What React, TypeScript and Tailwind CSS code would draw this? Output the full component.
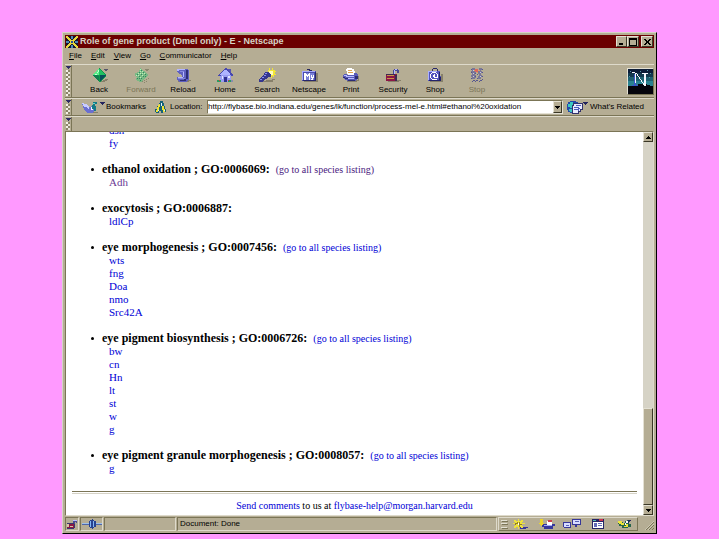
import type { ReactNode } from "react";

const menus = ["File", "Edit", "View", "Go", "Communicator", "Help"];

function Svg({ w = 20, h = 15, children }: { w?: number; h?: number; children: ReactNode }) {
  return (
    <svg width={w} height={h} viewBox={`0 0 ${w} ${h}`} shapeRendering="crispEdges" aria-hidden="true" className="block shrink-0">
      {children}
    </svg>
  );
}

const BackIcon = () => (
  <Svg>
    <path d="M9 13h5v-1h2v-1h3v1h-1v1h-2v1h-6z" fill="#87806a" />
    <path d="M10 0L17 6L17 8L11 14L10 14L4 8L4 6z" fill="#0f9a4c" />
    <path d="M10 0L10 7L4 7L4 6z" fill="#5af08a" />
    <path d="M10 1L16 6L16 7L10 7z" fill="#1fbf62" />
    <path d="M11 7L17 7L11 14z" fill="#06505a" />
    <path d="M4 7h5v1h1v5h-1l-5-5z" fill="#0f8050" />
    <path d="M8 4h1v1h-1zM6 6h2v1h-2zM9 2h1v2h-1z" fill="#c4ffd2" />
    <path d="M15 1h4v1h-1v1h-2v-1h-1z" fill="#55556b" />
  </Svg>
);

const ForwardIcon = () => (
  <Svg>
    <path d="M9 0L17 6L17 8L10 14L9 14L4 11L6 9L4 8L4 5L8 4z" fill="#7ab884" />
    <path d="M9 1h1v1h-1zM11 3h1v1h-1zM7 5h1v1h-1zM9 5h1v1h-1zM11 5h1v1h-1zM13 5h1v1h-1zM5 7h1v1h-1zM7 7h1v1h-1zM9 9h1v1h-1zM11 7h1v1h-1zM9 3h1v1h-1z" fill="#b8f0b8" />
    <path d="M10 2h1v1h-1zM8 4h1v1h-1zM12 4h1v1h-1zM6 6h1v1h-1zM10 6h1v1h-1zM14 6h1v1h-1zM8 8h1v1h-1zM12 8h1v1h-1zM10 10h1v1h-1zM8 10h1v1h-1zM6 10h1v1h-1zM9 12h1v1h-1zM14 8h1v1h-1z" fill="#2c8a60" />
    <path d="M11 13h1v1h-1zM13 12h1v1h-1zM15 11h1v1h-1zM17 10h1v1h-1zM13 14h1v1h-1zM15 13h1v1h-1zM14 1h4v1h-1v1h-2v-1h-1z" fill="#8a856c" />
  </Svg>
);

const ReloadIcon = () => (
  <Svg>
    <path d="M13 12h5v1h-2v1h-11v-1h8z" fill="#87806a" />
    <path d="M4 1h9l3 1v9l-3 3h-6l-3-2v-3h5v-2l-5-3z" fill="#5f60c0" />
    <path d="M4 1h8v1h-6v1h-2zM5 9h5v1h-5zM10 4h1v5h-1z" fill="#b4b7ff" />
    <path d="M13 2h2v9h-2v2h-2v-2h2zM7 12h5v1h-5z" fill="#2d2d75" />
    <path d="M7 3h4v1h-4zM5 10h7v1h-7z" fill="#8588dd" />
  </Svg>
);

const HomeIcon = () => (
  <Svg>
    <path d="M3 12h15v2h-15z" fill="#878cb0" />
    <path d="M13 1h3v6h-3z" fill="#5656b2" />
    <path d="M5 7h11v7h-11z" fill="#989cf0" />
    <path d="M10 0h1l7 7v1h-2l-5-5-6 5h-2v-1z" fill="#4848b0" />
    <path d="M10 2h1l4 4v1h-10v-1z" fill="#aeb4ff" />
    <path d="M9 9h3v5h-3z" fill="#303090" />
    <path d="M7 8h1v3h-1zM13 8h2v2h-2z" fill="#e3e7ff" />
    <path d="M2 12h4v2h-4zM13 12h3v2h-3z" fill="#2a9b60" />
    <path d="M4 12h1v1h-1zM13 12h1v1h-1z" fill="#e03535" />
  </Svg>
);

const SearchIcon = () => (
  <Svg>
    <path d="M5 13h4v-1h6v-1h3v1h-2v2h-11z" fill="#87806a" />
    <path d="M12 0h1v2h2v-2h1v2h2v1h1v1h-1v2h1v1h-2v2h-1v-1h-1v2h-1v-3h-3v-5h1z" fill="#f2e635" />
    <path d="M12 3h4v4h-3v-2h-1z" fill="#fffcbc" />
    <path d="M8 4h3l3 3v2h-3l-2 2h-1l-3 3h-3v-3l5-4z" fill="#36378f" />
    <path d="M8 5h2v1h-2zM7 7h2v1h-2zM5 9h2v1h-2zM3 11h2v1h-2z" fill="#8b90ef" />
  </Svg>
);

const NetscapeIcon = () => (
  <Svg>
    <path d="M17 5h2v9h-14v-1h12z" fill="#87806a" />
    <path d="M10 3v-1h-2v-1h3v1h2v1h2v1h-2v-1h-2v1z" fill="#26265f" />
    <path d="M3 3h14v10h-14z" fill="#4c4dac" />
    <path d="M3 3h13v1h-12v8h-1z" fill="#a6aaff" />
    <path d="M5 5h10v7h-10z" fill="#7a80d8" />
    <path d="M5 5h2v1h1v1h1v-1h1v-1h1v7h-1v-4h-1v1h-1v-1h-1v4h-2zM12 7h1v2h1v-2h1v3h-1v2h-2v-1h1v-1h-1z" fill="#fff" />
    <path d="M16 4h1v9h-13v-1h12z" fill="#26266d" />
  </Svg>
);

const PrintIcon = () => (
  <Svg>
    <path d="M6 13h9v-1h3v1h-2v1h-10zM17 8h1v4h-1z" fill="#87806a" />
    <path d="M6 0h5v1h2v2h1v5h-7v-2h-1v-3h-1v-2h1z" fill="#fff" />
    <path d="M7 2h4v1h-4zM7 4h5v1h-5z" fill="#e5a54c" />
    <path d="M3 6h3v1h7v-2h2l2 2v4l-3 2h-7l-5-3v-2z" fill="#585ab8" />
    <path d="M3 7h3v1h7v1h-8v-1h-2zM5 10h8v1h-8z" fill="#b9bdff" />
    <path d="M2 9h2v1h3v1h-3v-1h-2zM7 12h7v1h-7zM14 8h3v3h-3z" fill="#2c2c74" />
  </Svg>
);

const SecurityIcon = () => (
  <Svg>
    <path d="M14 12h4v1h-2v1h-11v-1h9z" fill="#87806a" />
    <path d="M10 7v-5h1v-1h4v1h1v3h-2v-2h-2v4z" fill="#484891" />
    <path d="M11 2h1v4h-1zM12 1h2v1h-2z" fill="#b5baff" />
    <path d="M3 6h11v7h-11z" fill="#8c1745" />
    <path d="M4 7h7v1h-7zM4 10h7v1h-7z" fill="#c99446" />
    <path d="M3 6h9v1h-9zM12 7h2v6h-2z" fill="#3d2a52" />
  </Svg>
);

const ShopIcon = () => (
  <Svg>
    <path d="M16 6h2v8h-13v-1h11z" fill="#87806a" />
    <path d="M7 3v-2h1v-1h4v1h1v2h-1v-2h-4v2z" fill="#292969" />
    <path d="M3 3h12l1 10h-13z" fill="#5355bd" />
    <path d="M3 3h9v1h-8v2h-1zM3 6h1v6h-1z" fill="#aab0ff" />
    <path d="M14 4h1l1 9h-2zM4 12h12v1h-12z" fill="#24246c" />
    <path d="M7 4h4v1h1v1h1v4h-4v-4h1v3h2v-3h-1v-1h-4v1h-1v4h1v1h5v1h-5v-1h-1v-1h-1v-4h1v-1h1z" fill="#fff" />
    <path d="M8 7h1v2h-1z" fill="#fff" />
  </Svg>
);

const StopIcon = () => (
  <Svg>
    <path d="M5 0h3v1h1v2h-1v1h1v2h-1v1h1v3h-1v1h-3v-2h-1v-2h1v-2h-1v-2h1zM12 0h3v2h-1v1h1v2h-1v2h1v2h-1v2h-3v-3h1v-2h-1v-3h1z" fill="#797798" />
    <path d="M8 1h3v3h-3z" fill="#dc665c" />
    <path d="M7 2h1v1h-1zM10 4h1v1h-1zM12 2h1v1h-1z" fill="#e79a54" />
    <path d="M8 5h1v1h-1zM10 6h1v1h-1zM8 8h1v1h-1zM10 10h1v1h-1zM6 12h2v1h-2zM9 12h2v1h-2zM13 12h2v1h-2zM5 13h1v1h-1zM8 13h1v1h-1zM12 13h1v1h-1zM4 1h1v1h-1zM15 1h1v1h-1zM4 4h1v1h-1zM15 4h1v1h-1zM15 8h1v1h-1zM4 10h1v1h-1zM15 11h1v1h-1z" fill="#55568f" />
    <path d="M6 2h1v1h-1zM6 5h1v1h-1zM6 8h1v1h-1zM13 4h1v1h-1zM13 8h1v1h-1z" fill="#c9c7e0" />
  </Svg>
);

const tools: { label: string; icon: ReactNode; disabled?: boolean }[] = [
  { label: "Back", icon: <BackIcon /> },
  { label: "Forward", icon: <ForwardIcon />, disabled: true },
  { label: "Reload", icon: <ReloadIcon /> },
  { label: "Home", icon: <HomeIcon /> },
  { label: "Search", icon: <SearchIcon /> },
  { label: "Netscape", icon: <NetscapeIcon /> },
  { label: "Print", icon: <PrintIcon /> },
  { label: "Security", icon: <SecurityIcon /> },
  { label: "Shop", icon: <ShopIcon /> },
  { label: "Stop", icon: <StopIcon />, disabled: true },
];

const AppIcon = () => (
  <Svg w={12} h={12}>
    <path d="M0 0h12v12h-12z" fill="#16162e" />
    <path d="M5 0h2v3h-2zM0 5h3v2h-3zM9 5h3v2h-3zM5 9h2v3h-2zM2 8h2v1h-2zM8 3h2v1h-2z" fill="#4b85b5" />
    <path d="M0 0h2v1h1v1h1v1h1v1h2v-1h1v-1h1v-1h1v-1h2v2h-1v1h-1v1h-1v1h-1v2h1v1h1v1h1v1h1v2h-2v-1h-1v-1h-1v-1h-1v-1h-2v1h-1v1h-1v1h-1v1h-2v-2h1v-1h1v-1h1v-1h1v-2h-1v-1h-1v-1h-1v-1h-1z" fill="#e8d63c" />
    <path d="M5 5h2v2h-2z" fill="#274d9b" />
  </Svg>
);

const BookmarksIcon = () => (
  <Svg w={24} h={13}>
    <path d="M7 11h10v1h-10z" fill="#87806a" />
    <path d="M1 2l5 2 3 2 5-3v6l-3 3h-5l-3-4z" fill="#6a6fd0" />
    <path d="M1 2l4 1 3 3v3l-3-3h-2z" fill="#c8ccff" />
    <path d="M10 6h2v3h-2z" fill="#f1f3ff" />
    <path d="M12 1h4v2h-2v2h1v5h-2v-2h-2v-4h1z" fill="#147a86" />
    <path d="M12 2h2v1h-2z" fill="#65d5d0" />
    <path d="M19 1h5v1h-1v1h-1v1h-1v-1h-1v-1h-1z" fill="#24245e" />
  </Svg>
);

const LocationIcon = () => (
  <Svg w={12} h={13}>
    <path d="M5 0h3v2h1v3h1v3h1v3h-3v1h-2v-2h-2v2h-3v-1h-1v-3h2v-3h2v-3h1z" fill="#156277" />
    <path d="M4 3h1v3h-1v3h-1v2h-2v-2h1v-3h1v-2h1zM7 5h2v3h1v3h-2v-2h-1z" fill="#f0e334" />
    <path d="M6 2h1v3h-1zM3 9h1v1h-1zM9 9h1v1h-1z" fill="#e7f4ff" />
  </Svg>
);

const RelatedIcon = () => (
  <Svg w={21} h={13}>
    <path d="M3 0h6v1h2v2h1v6h-1v2h-2v1h-6v-1h-2v-2h-1v-6h1v-2h2z" fill="#2449a8" />
    <path d="M3 1h3v2h2v2h-3v2h-2v-1h-2v-3h2zM2 8h3v3h-2z" fill="#3cc9c0" />
    <path d="M5 4h1v-2h10v7h-2v2h-2v2h-7z" fill="#32326c" />
    <path d="M7 3h8v5h-2v2h-2v2h-5v-7h1z" fill="#e9ebff" />
    <path d="M7 6h5v1h-5zM7 8h4v1h-4zM9 4h5v1h-5zM12 7h1v1h-1v2h-1v-3z" fill="#4f5dbd" />
    <path d="M16 1h5v1h-1v1h-1v1h-1v-1h-1v-1h-1z" fill="#24245e" />
  </Svg>
);

const LockIcon = () => (
  <Svg w={12} h={10}>
    <path d="M7 5v-3h1v-1h3v3h-1v-1h-1v3z" fill="#4b4b92" />
    <path d="M7 1h4v1h-4z" fill="#b8bcff" />
    <path d="M1 4h7v5h-7z" fill="#8c1745" />
    <path d="M1 4h7v1h-7zM8 5h1v4h-1zM1 9h7v1h-7z" fill="#37376f" />
    <path d="M1 5h2v3h-2zM4 7h3v1h-3z" fill="#d6c8a0" />
  </Svg>
);

const PlugIcon = () => (
  <Svg w={20} h={10}>
    <path d="M0 4h7v2h-7zM13 4h7v2h-7z" fill="#4e66a8" />
    <path d="M0 4h7v1h-7zM13 4h7v1h-7z" fill="#9ec0ea" />
    <path d="M7 2h1v-1h2v-1h1v1h1v1h2v6h-2v1h-1v1h-1v-1h-2v-1h-1z" fill="#27418f" />
    <path d="M8 2h1v6h-1zM11 2h1v6h-1z" fill="#83b6f5" />
  </Svg>
);

const components: { name: string; icon: ReactNode }[] = [
  {
    name: "Navigator",
    icon: (
      <Svg w={17} h={10}>
        <path d="M8 8h8v1h-2v1h-6z" fill="#34349a" />
        <path d="M6 0h1v2h2v-1h2v2h-1v1h3v1h-3v2h1v2h-2v-1h-2v2h-1v-2h-2v1h-2v-2h1v-2h-2v-1h2v-1h-1v-2h2v1h2z" fill="#eee23a" />
        <path d="M5 3h1v2h-2v1h-1v-2h2zM7 3h1v2h2v1h-2v2h-1z" fill="#917d24" />
        <path d="M6 4h1v2h-1z" fill="#fff" />
      </Svg>
    ),
  },
  {
    name: "Inbox",
    icon: (
      <Svg w={17} h={10}>
        <path d="M4 5h13v2h-2v3h-9v-2h-2z" fill="#37379c" />
        <path d="M2 0h3v4h1l-3 3-2-3h1z" fill="#ecd52c" />
        <path d="M9 2h5v4h-5z" fill="#fff" />
        <path d="M10 1h4v2h-4z" fill="#cf3e4e" />
        <path d="M6 6h8v1h-8z" fill="#a5abf8" />
      </Svg>
    ),
  },
  {
    name: "Newsgroups",
    icon: (
      <Svg w={18} h={10}>
        <path d="M9 0h9v6h-4v2h-2v-2h-3zM0 3h8v6h-7v-1h-1z" fill="#373799" />
        <path d="M10 1h7v4h-7zM1 4h6v4h-6z" fill="#d9ddff" />
        <path d="M12 2h4v1h-4zM3 6h3v1h-3z" fill="#5761b4" />
      </Svg>
    ),
  },
  {
    name: "Address Book",
    icon: (
      <Svg w={14} h={10}>
        <path d="M1 0h12v10h-12z" fill="#252566" />
        <path d="M2 3h10v6h-10z" fill="#fff" />
        <path d="M2 1h3v1h-3z" fill="#55b8a8" />
        <path d="M8 0h4v2h-4z" fill="#cd3651" />
        <path d="M3 4h3v4h-3zM7 4h4v1h-4zM7 6h4v1h-4z" fill="#626bb8" />
      </Svg>
    ),
  },
  {
    name: "Composer",
    icon: (
      <Svg w={15} h={10}>
        <path d="M1 3h5v1h2v-2h2v-1h3v2h-1v2h2v3h-3v1h-6v-2h-3v-2h-1z" fill="#25654c" />
        <path d="M1 2h4v2h2v2h-3v-1h-2v-1h-1zM9 5h2v3h-4v-1h2z" fill="#eee43b" />
        <path d="M9 2h2v2h-2v2h-1v-2h1z" fill="#fff" />
        <path d="M11 1h3v1h-2v2h-1z" fill="#24245e" />
      </Svg>
    ),
  },
];

type Group = { title: string; genes: string[]; listing: boolean; visited?: boolean };

const groups: Group[] = [
  { title: "ethanol oxidation ; GO:0006069:", genes: ["Adh"], listing: true, visited: true },
  { title: "exocytosis ; GO:0006887:", genes: ["ldlCp"], listing: false },
  { title: "eye morphogenesis ; GO:0007456:", genes: ["wts", "fng", "Doa", "nmo", "Src42A"], listing: true },
  { title: "eye pigment biosynthesis ; GO:0006726:", genes: ["bw", "cn", "Hn", "lt", "st", "w", "g"], listing: true },
  { title: "eye pigment granule morphogenesis ; GO:0008057:", genes: ["g"], listing: true },
];

function Grip() {
  return (
    <div className="flex w-[7px] shrink-0 flex-col items-center border-r border-[#7b7556] pt-px">
      <svg width="5" height="3" viewBox="0 0 5 3" shapeRendering="crispEdges" aria-hidden="true">
        <path d="M0 0h5v1h-1v1h-1v1h-1v-1h-1v-1h-1z" fill="#2d2d66" />
      </svg>
      <div className="my-px w-1 flex-1 bg-[conic-gradient(#8b8468_25%,#e7e4d8_0_50%,#8b8468_0_75%,#f4f2ea_0)] bg-[length:4px_4px]" />
    </div>
  );
}

const raised = "border border-t-[#e4e1d4] border-l-[#e4e1d4] border-r-[#3a3725] border-b-[#3a3725] bg-[#b5ad94]";
const row = "flex border-t border-t-[#dedacb] border-b border-b-[#7b7556]";

function ScrollButton({ up }: { up?: boolean }) {
  return (
    <button aria-label={up ? "Scroll up" : "Scroll down"} className={`${raised} flex h-[10px] w-full items-center justify-center`}>
      <svg width="5" height="3" viewBox="0 0 5 3" shapeRendering="crispEdges" aria-hidden="true">
        <path d={up ? "M2 0h1v1h1v1h1v1h-5v-1h1v-1h1z" : "M0 0h5v1h-1v1h-1v1h-1v-1h-1v-1h-1z"} />
      </svg>
    </button>
  );
}

function Titlebar() {
  return (
    <header className="flex h-[13px] shrink-0 items-center bg-[#6b0000] px-px">
      <AppIcon />
      <h1 className="ml-[2px] flex-1 truncate text-[9px] leading-[13px] font-bold text-[#d6d3c6]">
        Role of gene product (Dmel only) - E - Netscape
      </h1>
      <button aria-label="Minimize" className={`${raised} flex h-[11px] w-[11px] items-center justify-center`}>
        <Svg w={7} h={7}><path d="M1 5h4v2h-4z" /></Svg>
      </button>
      <button aria-label="Maximize" className={`${raised} flex h-[11px] w-[12px] items-center justify-center`}>
        <Svg w={8} h={8}><path d="M0 0h8v8h-8zM1 2v5h6v-5z" fillRule="evenodd" /></Svg>
      </button>
      <button aria-label="Close" className={`${raised} ml-[2px] flex h-[11px] w-[12px] items-center justify-center`}>
        <Svg w={7} h={6}><path d="M0 0h2v1h1v1h1v-1h1v-1h2v1h-1v1h-1v2h1v1h1v1h-2v-1h-1v-1h-1v1h-1v1h-2v-1h1v-1h1v-2h-1v-1h-1z" /></Svg>
      </button>
    </header>
  );
}

function Logo() {
  return (
    <a href="#home" aria-label="Netscape home" className="flex h-[27px] w-[27px] shrink-0 items-center justify-center self-center border border-[#e4e1d4] border-r-[#7b7556] border-b-[#7b7556]">
      <svg width="25" height="25" viewBox="0 0 25 25" shapeRendering="crispEdges" aria-hidden="true">
        <path d="M0 0h25v25h-25z" fill="#0b1c38" />
        <path d="M0 4h25v4h-25z" fill="#12384e" />
        <path d="M0 8h25v4h-25z" fill="#1d5f70" />
        <path d="M0 12h25v6h-25z" fill="#2a8290" />
        <path d="M2 2h1v1h-1zM19 1h1v1h-1zM22 4h1v1h-1zM12 2h1v1h-1zM1 7h1v1h-1zM21 8h1v1h-1z" fill="#4f94a4" />
        <path d="M0 17h6v-1h4v-1h9v1h3v1h3v8h-25z" fill="#05050d" />
        <path d="M6 5h2v11h2v1h-6v-1h2zM16 5h2v12h-1v-2h-1z" fill="#3a57c8" />
        <path d="M4 4h5v1h1v2h1v1h1v2h1v1h1v2h1v1h1v-9h-2v-1h6v1h-2v12h-2v-1h-1v-2h-1v-1h-1v-2h-1v-1h-1v-2h-1v-1h-1v-2h-1v9h-1v-11h-3z" fill="#f5f7ff" />
      </svg>
    </a>
  );
}

export default function App() {
  return (
    <div className="flex h-screen bg-[#ff99ff] px-[62px] pt-8 pb-[5px] font-['Liberation_Sans',Arial,sans-serif] text-[8px] text-black">
      <div className="flex min-w-0 flex-1 flex-col border border-t-[#d6d3c6] border-r-black border-b-black border-l-[#d6d3c6] bg-[#b5ad94] p-[2px]">
        <Titlebar />

        <nav className="flex h-4 shrink-0 items-center gap-[9px] px-1 text-[8px]">
          {menus.map((m) => (
            <button key={m} className="leading-4">
              <span className="underline underline-offset-1">{m[0]}</span>
              {m.slice(1)}
            </button>
          ))}
        </nav>

        <div className={`${row} h-[34px] shrink-0`}>
          <Grip />
          <div className="ml-[6px] flex flex-1">
            {tools.map((t) => (
              <button key={t.label} disabled={t.disabled} className="flex w-[42px] flex-col items-center pt-[3px] disabled:text-[#7b7556]">
                {t.icon}
                <span className="mt-[2px] leading-[10px]">{t.label}</span>
              </button>
            ))}
          </div>
          <Logo />
        </div>

        <div className={`${row} h-[18px] shrink-0`}>
          <Grip />
          <button className="ml-[9px] flex items-center gap-px">
            <BookmarksIcon />
            Bookmarks
          </button>
          <div className="ml-[9px] flex min-w-0 flex-1 items-center">
            <LocationIcon />
            <label htmlFor="location" className="ml-[3px] w-[37px] shrink-0">Location:</label>
            <div className="flex h-[14px] min-w-0 flex-1 border border-t-[#7b7556] border-r-[#e4e1d4] border-b-[#e4e1d4] border-l-[#7b7556] bg-white">
              <input
                id="location"
                className="min-w-0 flex-1 bg-white text-[8px] outline-none"
                defaultValue="http://flybase.bio.indiana.edu/genes/lk/function/process-mel-e.html#ethanol%20oxidation"
              />
              <button aria-label="Location history" className={`${raised} flex w-[9px] items-center justify-center`}>
                <Svg w={5} h={3}><path d="M0 0h5v1h-1v1h-1v1h-1v-1h-1v-1h-1z" /></Svg>
              </button>
            </div>
          </div>
          <button className="mr-[10px] ml-1 flex items-center gap-[2px] whitespace-nowrap">
            <RelatedIcon />
            What's Related
          </button>
        </div>

        <div className="flex h-[15px] shrink-0 border-t border-[#dedacb]">
          <Grip />
        </div>

        <div className="flex min-h-0 flex-1 border border-t-[#7b7556] border-r-[#dedacb] border-b-[#dedacb] border-l-[#7b7556]">
          <main className="min-w-0 flex-1 overflow-hidden bg-white px-[6px] font-['Liberation_Serif','Times_New_Roman',serif] text-[11px] leading-[13px] text-[#0000d6]">
            <ul className="-mt-2 flex flex-col gap-[13px]">
              <li className="flex flex-col items-start pl-[37px]">
                <a href="#dsh">dsh</a>
                <a href="#fy">fy</a>
              </li>
              {groups.map((g) => (
                <li key={g.title} className="flex flex-col pl-[19px]">
                  <div className="flex items-center text-black">
                    <span className="mr-2 size-[3px] rounded-full bg-black" />
                    <strong className="text-[12px] leading-[13px]">{g.title}</strong>
                    {g.listing && (
                      <a href="#all" className={`ml-[6px] text-[10px] leading-[13px] ${g.visited ? "text-[#4a1a80]" : "text-[#0000d6]"}`}>
                        (go to all species listing)
                      </a>
                    )}
                  </div>
                  <div className={`flex flex-col items-start pl-[18px] ${g.visited ? "text-[#6b3a94]" : ""}`}>
                    {g.genes.map((gene) => (
                      <a key={gene} href={`#${gene}`}>{gene}</a>
                    ))}
                  </div>
                </li>
              ))}
            </ul>
            <hr className="mt-4 h-[3px] border-t border-b border-t-[#7b7556] border-b-[#d6d3c6]" />
            <p className="mt-[5px] text-center text-[10px] leading-[13px]">
              <a href="#comments">Send comments</a>
              <span className="text-black"> to us at </span>
              <a href="mailto:flybase-help@morgan.harvard.edu">flybase-help@morgan.harvard.edu</a>
            </p>
          </main>
          <div className="flex w-[10px] shrink-0 flex-col bg-[#d6d3c6]">
            <ScrollButton up />
            <div className="flex-[268]" />
            <div className={`${raised} flex-[96]`} />
            <ScrollButton />
          </div>
        </div>

        <footer className="mt-px flex h-[14px] shrink-0 items-stretch gap-px">
          <div className="flex w-[14px] items-center justify-center border border-[#7b7556] border-r-[#dedacb] border-b-[#dedacb]"><LockIcon /></div>
          <div className="flex w-[23px] items-center justify-center border border-[#7b7556] border-r-[#dedacb] border-b-[#dedacb]"><PlugIcon /></div>
          <div className="w-[72px] border border-[#7b7556] border-r-[#dedacb] border-b-[#dedacb]" />
          <div className="flex-1 border border-[#7b7556] border-r-[#dedacb] border-b-[#dedacb] pl-[2px] leading-[12px]">Document: Done</div>
          <div className="flex w-[140px] items-center border border-[#dedacb] border-r-[#7b7556] border-b-[#7b7556] pl-[2px]">
            <Svg w={7} h={10}>
              <path d="M0 1h6v1h-6zM0 4h6v1h-6zM0 8h6v1h-6z" fill="#e4e1d4" />
              <path d="M1 2h6v1h-6zM1 5h6v1h-6zM1 9h6v1h-6z" fill="#7b7556" />
            </Svg>
            <div className="flex flex-1 justify-around">
              {components.map((c) => (
                <button key={c.name} aria-label={c.name} className="flex w-[25px] justify-center">{c.icon}</button>
              ))}
            </div>
          </div>
          <div className="flex w-[15px] items-end justify-end pb-px">
            <svg width="9" height="9" viewBox="0 0 9 9" aria-hidden="true">
              <path d="M1 9L9 1M4 9L9 4M7 9L9 7" stroke="#7b7556" />
              <path d="M0 9L9 0M3 9L9 3" stroke="#dedacb" strokeWidth="0.6" />
            </svg>
          </div>
        </footer>
      </div>
    </div>
  );
}
